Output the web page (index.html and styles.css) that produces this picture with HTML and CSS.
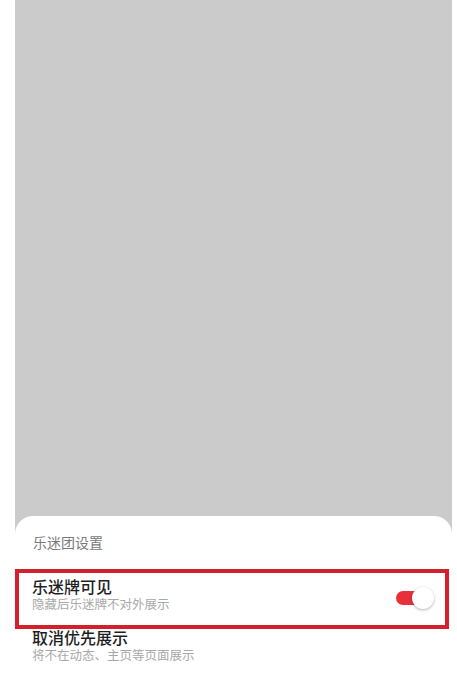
FILE: index.html
```html
<!DOCTYPE html>
<html lang="zh">
<head>
<meta charset="utf-8">
<link rel="stylesheet" href="styles.css">
</head>
<body>
<div class="page">
  <div class="backdrop">
    <div class="spacer"></div>
    <div class="sheet">
      <div class="sheet-title">乐迷团设置</div>
      <div class="row row-highlight">
        <div class="texts">
          <div class="row-title">乐迷牌可见</div>
          <div class="row-sub">隐藏后乐迷牌不对外展示</div>
        </div>
        <div class="toggle"><span class="track"></span><span class="knob"></span></div>
      </div>
      <div class="row row-plain">
        <div class="texts">
          <div class="row-title">取消优先展示</div>
          <div class="row-sub">将不在动态、主页等页面展示</div>
        </div>
      </div>
    </div>
  </div>
</div>
</body>
</html>
```

FILE: styles.css
```css
html, body {
  margin: 0;
  padding: 0;
  background: #ffffff;
  font-family: "Liberation Sans", "Noto Sans CJK SC", sans-serif;
}
.page {
  width: 457px;
  height: 680px;
  padding: 0 5px 0 15px;
  box-sizing: border-box;
  overflow: hidden;
}
.backdrop {
  height: 680px;
  background: #cbcbcb;
  display: flex;
  flex-direction: column;
}
.spacer {
  height: 516px;
  flex: none;
}
.sheet {
  flex: 1;
  background: #ffffff;
  border-radius: 18px 18px 0 0;
  padding-top: 17px;
  display: flex;
  flex-direction: column;
}
.sheet-title {
  font-size: 14px;
  line-height: 20px;
  color: #7a7a7a;
  padding-left: 18px;
  margin-bottom: 16px;
}
.row {
  display: flex;
  align-items: flex-start;
  justify-content: space-between;
  margin-right: 3px;
}
.row-highlight {
  border: 4px solid #d3212c;
  padding: 5px 11px 12px 13px;
}
.row-plain {
  padding: 0 11px 0 17px;
}
.row-title {
  font-size: 16px;
  line-height: 20px;
  color: #1e1e1e;
  font-weight: 500;
}
.row-sub {
  font-size: 12.5px;
  line-height: 15px;
  color: #a8a8a8;
}
.toggle {
  position: relative;
  width: 38px;
  height: 22px;
  margin-top: 9px;
  flex: none;
}
.track {
  position: absolute;
  left: 0;
  top: 4px;
  width: 30px;
  height: 14px;
  border-radius: 7px;
  background: #e8303a;
}
.knob {
  position: absolute;
  right: 0;
  top: 0;
  width: 22px;
  height: 22px;
  border-radius: 50%;
  background: #ffffff;
  box-shadow: 0 1px 3px rgba(0, 0, 0, 0.3);
}
```
